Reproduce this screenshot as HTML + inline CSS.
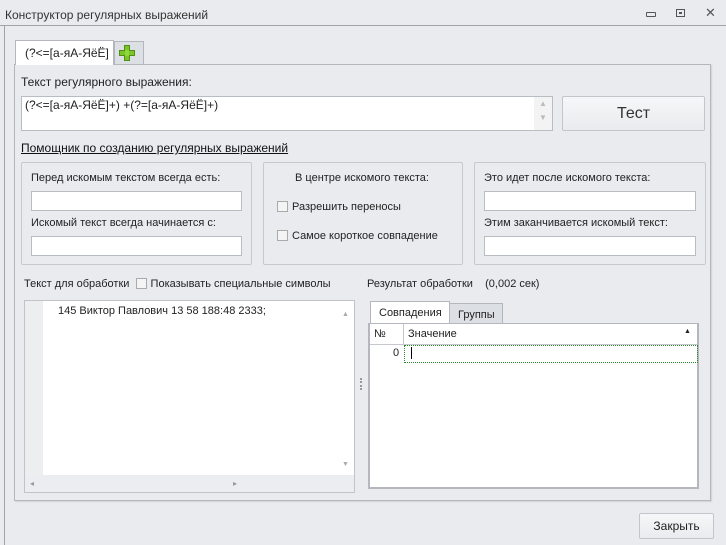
<!DOCTYPE html>
<html><head><meta charset="utf-8"><style>
*{box-sizing:border-box;margin:0;padding:0}
body{width:726px;height:545px;background:#e9ebef;font:11px "Liberation Sans",sans-serif;color:#222;position:relative;overflow:hidden}
.a{position:absolute}
.in{position:absolute;background:#fff;border:1px solid #b8bcc3}
.gb{position:absolute;border:1px solid #c6c9ce;border-radius:2px}
.cb{display:inline-block;width:11px;height:11px;border:1px solid #aaa;background:#f4f4f4;vertical-align:-2px;margin-right:4px}
.btn{position:absolute;border:1px solid #c2c5ca;border-radius:2px;background:linear-gradient(#f6f7f8,#e9ebee);text-align:center}
</style></head><body>
<div class="a" style="left:5px;top:8px;font-size:12px;color:#333">Конструктор регулярных выражений</div>
<div class="a" style="left:646px;top:12px;width:10px;height:5px;border:1px solid #555;border-radius:1px"></div>
<div class="a" style="left:676px;top:9px;width:9px;height:8px;border:1px solid #555"></div>
<div class="a" style="left:679px;top:12px;width:3px;height:2px;background:#555"></div>
<div class="a" style="left:705px;top:5px;font-size:13px;color:#555">✕</div>
<div class="a" style="left:0;top:25px;width:726px;height:1px;background:#a0a4aa"></div>
<div class="a" style="left:4px;top:26px;width:1px;height:519px;background:#a0a4aa"></div>

<div class="a" style="left:14px;top:64px;width:697px;height:437px;border:1px solid #b3b7bd;box-shadow:1px 1px 1px #d0d3d7"></div>
<div class="a" style="left:15px;top:40px;width:99px;height:25px;border:1px solid #b3b7bd;border-bottom:none;background:#fff"></div>
<div class="a" style="left:25px;top:46px;font-size:12px">(?&lt;=[а-яА-ЯёЁ]</div>
<div class="a" style="left:114px;top:41px;width:30px;height:23px;background:#dcdfe3;border:1px solid #b3b7bd;border-bottom:none"></div>
<div class="a" style="left:124px;top:45px;width:6px;height:16px;background:#7cc42a;border:1px solid #4f8f14"></div>
<div class="a" style="left:119px;top:50px;width:16px;height:6px;background:#7cc42a;border:1px solid #4f8f14"></div>
<div class="a" style="left:125px;top:50px;width:4px;height:6px;background:#8fd83a"></div>

<div class="a" style="left:21px;top:75px;font-size:12px">Текст регулярного выражения:</div>
<div class="in" style="left:21px;top:96px;width:532px;height:35px"></div>
<div class="a" style="left:534px;top:97px;width:18px;height:33px;background:#f3f3f3;color:#bbb;font-size:8px;text-align:center;line-height:14px">▲<br>▼</div>
<div class="a" style="left:25px;top:98px;font-size:12px">(?&lt;=[а-яА-ЯёЁ]+) +(?=[а-яА-ЯёЁ]+)</div>
<div class="btn" style="left:562px;top:96px;width:143px;height:35px;font-size:16px;line-height:33px;color:#333">Тест</div>
<div class="a" style="left:21px;top:141px;font-size:12px;text-decoration:underline;color:#111">Помощник по созданию регулярных выражений</div>

<div class="gb" style="left:21px;top:162px;width:231px;height:103px"></div>
<div class="a" style="left:31px;top:172px">Перед искомым текстом всегда есть:</div>
<div class="in" style="left:31px;top:191px;width:211px;height:20px"></div>
<div class="a" style="left:31px;top:217px">Искомый текст всегда начинается с:</div>
<div class="in" style="left:31px;top:236px;width:211px;height:20px"></div>

<div class="gb" style="left:263px;top:162px;width:200px;height:103px"></div>
<div class="a" style="left:295px;top:172px">В центре искомого текста:</div>
<div class="a" style="left:277px;top:201px"><span class="cb"></span>Разрешить переносы</div>
<div class="a" style="left:277px;top:230px"><span class="cb"></span>Самое короткое совпадение</div>

<div class="gb" style="left:474px;top:162px;width:232px;height:103px"></div>
<div class="a" style="left:484px;top:172px">Это идет после искомого текста:</div>
<div class="in" style="left:484px;top:191px;width:212px;height:20px"></div>
<div class="a" style="left:484px;top:217px">Этим заканчивается искомый текст:</div>
<div class="in" style="left:484px;top:236px;width:212px;height:20px"></div>

<div class="a" style="left:24px;top:278px">Текст для обработки &nbsp;<span class="cb"></span>Показывать специальные символы</div>
<div class="in" style="left:24px;top:300px;width:331px;height:193px;border-color:#c0c3c8"></div>
<div class="a" style="left:25px;top:301px;width:18px;height:174px;background:#eceef0"></div>
<div class="a" style="left:58px;top:305px">145 Виктор Павлович 13 58 188:48 2333;</div>
<div class="a" style="left:337px;top:301px;width:17px;height:174px;background:#fff;color:#aaa;font-size:7px;text-align:center;padding-top:10px">▲<div style="margin-top:143px">▼</div></div>
<div class="a" style="left:25px;top:475px;width:329px;height:17px;background:#ebedf0;color:#999;font-size:8px;line-height:17px;padding-left:5px">◂<span style="position:absolute;left:208px">▸</span></div>
<div class="a" style="left:360px;top:378px;width:2px;height:12px;border-left:2px dotted #999"></div>

<div class="a" style="left:367px;top:278px">Результат обработки &nbsp;&nbsp;&nbsp;(0,002 сек)</div>
<div class="a" style="left:449px;top:303px;width:54px;height:21px;background:#dcdfe3;border:1px solid #b3b7bd;padding:5px 0 0 8px">Группы</div>
<div class="a" style="left:370px;top:301px;width:80px;height:23px;background:#fff;border:1px solid #b3b7bd;border-bottom:none;padding:5px 0 0 8px">Совпадения</div>
<div class="in" style="left:368px;top:323px;width:331px;height:166px;border:2px solid #b4b8be;border-top:1px solid #b4b8be"></div>
<div class="a" style="left:370px;top:324px;width:327px;height:21px;background:#fff;border-bottom:1px solid #c5c8cc"></div>
<div class="a" style="left:403px;top:324px;width:1px;height:21px;background:#c5c8cc"></div>
<div class="a" style="left:374px;top:328px">№</div>
<div class="a" style="left:408px;top:328px">Значение</div>
<div class="a" style="left:684px;top:328px;font-size:7px">▲</div>
<div class="a" style="left:393px;top:347px">0</div>
<div class="a" style="left:404px;top:345px;width:294px;height:18px;border:1px dotted #2a8a2a"></div>
<div class="a" style="left:411px;top:347px;width:1px;height:12px;background:#000"></div>

<div class="btn" style="left:639px;top:513px;width:75px;height:26px;line-height:24px;font-size:12px">Закрыть</div>
</body></html>
